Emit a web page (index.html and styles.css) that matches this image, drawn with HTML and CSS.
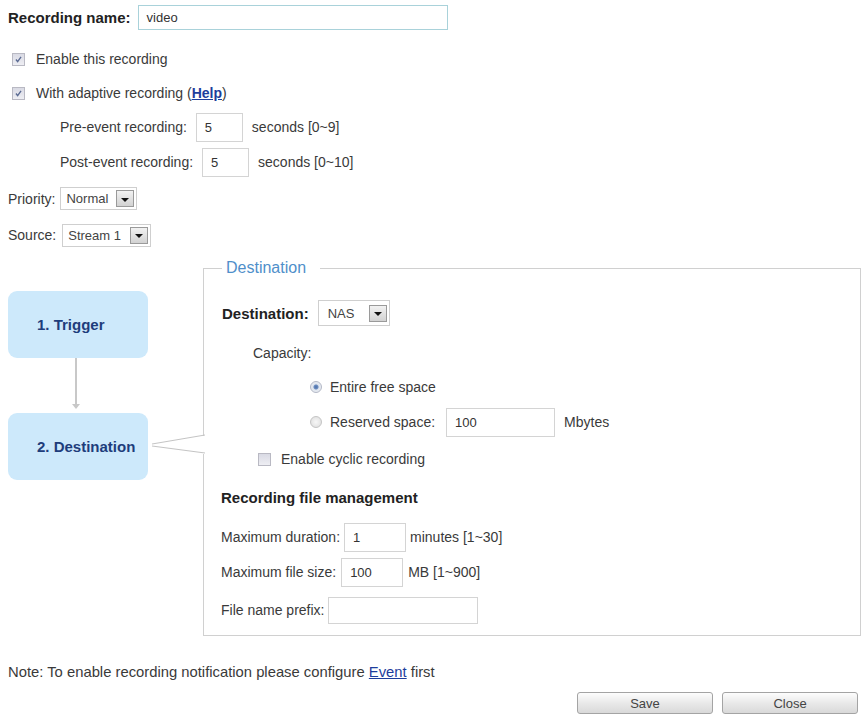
FILE: index.html
```html
<!DOCTYPE html>
<html lang="en">
<head>
    <meta charset="UTF-8">
    <title>Recording</title>
    <link rel="stylesheet" href="styles.css">
</head>
<body>
    <!-- General settings -->
    <div class="form-top">
        <div class="row r-name">
            <span class="label-bold">Recording name:</span>
            <span class="field name-field">video</span>
        </div>
        <div class="row r-enable">
            <span class="check checked"><svg viewBox="0 0 13 13"><path d="M3.5 6.5 L5.5 9 L9.5 3.5" /></svg></span>
            <span>Enable this recording</span>
        </div>
        <div class="row">
            <span class="check checked"><svg viewBox="0 0 13 13"><path d="M3.5 6.5 L5.5 9 L9.5 3.5" /></svg></span>
            <span>With adaptive recording (<a href="#" class="link">Help</a>)</span>
        </div>
        <div class="row indent">
            <span>Pre-event recording:</span>
            <span class="field small-field">5</span>
            <span>seconds [0~9]</span>
        </div>
        <div class="row indent r-post">
            <span>Post-event recording:</span>
            <span class="field small-field">5</span>
            <span>seconds [0~10]</span>
        </div>
        <div class="row r-priority">
            <span>Priority:</span>
            <span class="select sel-priority"><span class="sel-text">Normal</span><span class="sel-btn"></span></span>
        </div>
        <div class="row r-source">
            <span>Source:</span>
            <span class="select sel-source"><span class="sel-text">Stream 1</span><span class="sel-btn"></span></span>
        </div>
    </div>

    <!-- Steps + destination panel -->
    <div class="main">
        <div class="steps">
            <div class="step">1. Trigger</div>
            <div class="step-line"></div>
            <div class="step">2. Destination</div>
            <svg class="pointer" width="60" height="24" viewBox="0 0 60 24">
                <rect x="53" y="2" width="4" height="18" fill="#fff" />
                <path d="M2 10 L55 1 M2 12 L55 19" stroke="#c4c4c4" stroke-width="1" fill="none" />
            </svg>
        </div>

        <fieldset class="panel">
            <legend>Destination</legend>
            <div class="row p-dest">
                <span class="label-bold">Destination:</span>
                <span class="select sel-dest"><span class="sel-text">NAS</span><span class="sel-btn"></span></span>
            </div>
            <div class="row p-capacity">
                <span>Capacity:</span>
            </div>
            <div class="row p-radio">
                <span class="radio on"></span>
                <span>Entire free space</span>
            </div>
            <div class="row p-radio p-reserved">
                <span class="radio"></span>
                <span>Reserved space:</span>
                <span class="field reserved-field">100</span>
                <span>Mbytes</span>
            </div>
            <div class="row p-cyclic">
                <span class="check"></span>
                <span>Enable cyclic recording</span>
            </div>
            <div class="row p-title">
                <span class="label-bold">Recording file management</span>
            </div>
            <div class="row p-file p-duration">
                <span>Maximum duration:</span>
                <span class="field dur-field">1</span>
                <span>minutes [1~30]</span>
            </div>
            <div class="row p-file p-size">
                <span>Maximum file size:</span>
                <span class="field dur-field">100</span>
                <span>MB [1~900]</span>
            </div>
            <div class="row p-file p-prefix">
                <span>File name prefix:</span>
                <span class="field prefix-field"></span>
            </div>
        </fieldset>
    </div>

    <!-- Footer -->
    <p class="note">Note: To enable recording notification please configure <a href="#" class="link">Event</a> first</p>
    <div class="buttons">
        <button class="btn">Save</button>
        <button class="btn">Close</button>
    </div>
</body>
</html>
```

FILE: styles.css
```css
* {
    margin: 0;
    padding: 0;
    box-sizing: border-box;
}

body {
    width: 864px;
    height: 715px;
    overflow: hidden;
    background-color: white;
    font-family: 'Liberation Sans', Arial, sans-serif;
    font-size: 14px;
    color: #3a3a3a;
}

.form-top {
    padding-left: 8px;
}

.row {
    display: flex;
    align-items: center;
    height: 34px;
    gap: 9px;
}

.label-bold {
    font-weight: bold;
    font-size: 15px;
    color: #222;
}

.link {
    color: #1d3d9c;
    font-weight: bold;
    text-decoration: underline;
}

.note .link {
    font-weight: normal;
}

/* Text boxes */
.field {
    display: flex;
    align-items: center;
    height: 29px;
    padding-left: 8px;
    border: 1px solid #d4d4d4;
    background-color: white;
    color: #333;
    font-size: 13px;
}

.name-field {
    width: 310px;
    height: 25px;
    border-color: #a9d2da;
}

.small-field {
    width: 47px;
}

.reserved-field {
    width: 109px;
    margin-right: 1px;
}

.dur-field {
    width: 62px;
}

.prefix-field {
    width: 150px;
    height: 27px;
}

/* Checkboxes */
.check {
    width: 13px;
    height: 13px;
    border: 1px solid #b9b9c3;
    background: linear-gradient(#d9dae4, #eeeef3);
    display: inline-flex;
    margin-left: 4px;
    margin-right: 2px;
}

.check svg {
    width: 11px;
    height: 11px;
}

.check svg path {
    stroke: #5a6a92;
    stroke-width: 1.6;
    fill: none;
}

.r-name {
    gap: 7px;
}

.r-enable {
    margin-top: 8px;
}

.indent {
    padding-left: 52px;
}

.r-post {
    height: 36px;
}

.r-priority {
    height: 37px;
    gap: 5px;
}

.r-source {
    height: 36px;
    gap: 6px;
}

/* Select boxes */
.select {
    display: flex;
    align-items: center;
    justify-content: space-between;
    height: 23px;
    padding: 0 2px 0 5px;
    border: 1px solid #cfcfcf;
    background-color: white;
    color: #444;
    font-size: 13px;
}

.sel-btn {
    width: 18px;
    height: 17px;
    border: 1px solid #9a9a9a;
    background: linear-gradient(#f2f2f2, #d2d2d2);
    display: flex;
    align-items: center;
    justify-content: center;
}

.sel-btn::after {
    content: "";
    border-left: 4px solid transparent;
    border-right: 4px solid transparent;
    border-top: 4px solid #111;
    margin-top: 2px;
}

.sel-priority {
    width: 77px;
}

.sel-source {
    width: 89px;
}

.sel-dest {
    width: 72px;
    height: 26px;
    padding-left: 9px;
}

/* Main area */
.main {
    display: flex;
    padding-left: 8px;
}

.steps {
    position: relative;
    width: 195px;
    flex-shrink: 0;
    padding-top: 38px;
}

.step {
    width: 140px;
    height: 67px;
    border-radius: 9px;
    background-color: #cde9fb;
    color: #1e3d7b;
    font-weight: bold;
    font-size: 15px;
    display: flex;
    align-items: center;
    padding-left: 29px;
}

.step-line {
    width: 2px;
    height: 55px;
    margin-left: 67px;
    background: linear-gradient(#c8c8c8 0, #c8c8c8 48px, white 48px);
    position: relative;
}

.step-line::after {
    content: "";
    position: absolute;
    left: -3px;
    bottom: 4px;
    border-left: 4px solid transparent;
    border-right: 4px solid transparent;
    border-top: 5px solid #c8c8c8;
}

.pointer {
    position: absolute;
    left: 142px;
    top: 181px;
}

.panel {
    width: 658px;
    margin-top: 5px;
    border: 1px solid #d0d0d0;
    padding: 0 0 8px 17px;
}

.panel legend {
    margin-left: 1px;
    padding: 0 14px 0 4px;
    line-height: 20px;
    font-size: 16px;
    color: #4f8fca;
}

.p-dest {
    margin-top: 18px;
    padding-left: 1px;
    gap: 9px;
}

.p-capacity {
    margin-top: 6px;
    padding-left: 32px;
}

.p-radio {
    padding-left: 89px;
    gap: 8px;
}

.p-reserved {
    margin-top: 1px;
}

.radio {
    width: 12px;
    height: 12px;
    border-radius: 50%;
    border: 1px solid #c4c4c4;
    background: radial-gradient(#f7f7f7, #dcdcdc);
    position: relative;
}

.radio.on {
    border-color: #b3b8c6;
    background: radial-gradient(#4b6fa8 0, #6b8cc0 2px, #dfe5ee 3px, #eceff4 6px);
}

.p-reserved .field {
    margin-left: 3px;
}

.p-cyclic {
    margin-top: 3px;
    padding-left: 33px;
    gap: 8px;
}

.p-title {
    margin-top: 4px;
}

.p-file {
    gap: 4px;
}

.p-duration {
    margin-top: 6px;
}

.p-size {
    margin-top: 1px;
    gap: 5px;
}

.p-prefix {
    margin-top: 4px;
    gap: 4px;
}

/* Footer */
.note {
    margin-top: 19px;
    padding-left: 8px;
    line-height: 34px;
    font-size: 14.8px;
}

.buttons {
    display: flex;
    justify-content: flex-end;
    gap: 9px;
    padding-right: 6px;
    margin-top: 3px;
}

.btn {
    width: 136px;
    height: 22px;
    border: 1px solid #a4a4a4;
    border-radius: 3px;
    background: linear-gradient(#fdfdfd, #e9e9e9 50%, #d9d9d9);
    font-family: 'Liberation Sans', Arial, sans-serif;
    font-size: 13px;
    color: #444;
}
```
